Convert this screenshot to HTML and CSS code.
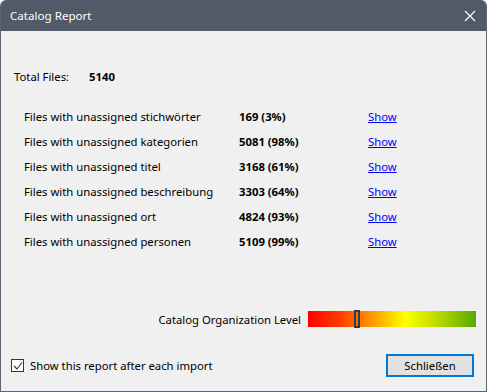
FILE: index.html
```html
<!DOCTYPE html>
<html lang="en">
<head>
    <meta charset="UTF-8">
    <title>Catalog Report</title>
    <link rel="stylesheet" href="styles.css">
</head>
<body>
    <div class="window">
        <div class="titlebar">
            <span class="title">Catalog Report</span>
            <svg class="close" width="12" height="12" viewBox="0 0 12 12">
                <path d="M1 1 L11 11 M11 1 L1 11" stroke="#fff" stroke-width="1.2" fill="none"/>
            </svg>
        </div>
        <div class="content">
            <div class="total">
                <span class="total-label">Total Files:</span>
                <span class="total-value">5140</span>
            </div>

            <div class="stats">
                <span class="label">Files with unassigned stichwörter</span>
                <span class="value">169 (3%)</span>
                <a class="show" href="#">Show</a>

                <span class="label">Files with unassigned kategorien</span>
                <span class="value">5081 (98%)</span>
                <a class="show" href="#">Show</a>

                <span class="label">Files with unassigned titel</span>
                <span class="value">3168 (61%)</span>
                <a class="show" href="#">Show</a>

                <span class="label">Files with unassigned beschreibung</span>
                <span class="value">3303 (64%)</span>
                <a class="show" href="#">Show</a>

                <span class="label">Files with unassigned ort</span>
                <span class="value">4824 (93%)</span>
                <a class="show" href="#">Show</a>

                <span class="label">Files with unassigned personen</span>
                <span class="value">5109 (99%)</span>
                <a class="show" href="#">Show</a>
            </div>

            <div class="level">
                <span class="level-label">Catalog Organization Level</span>
                <div class="level-bar">
                    <div class="marker" style="left: 46px"></div>
                </div>
            </div>

            <div class="footer">
                <label class="check">
                    <span class="box">
                        <svg width="10" height="10" viewBox="0 0 10 10">
                            <path d="M1 5 L4 8 L9 1.5" stroke="#333" stroke-width="1.1" fill="none"/>
                        </svg>
                    </span>
                    Show this report after each import
                </label>
                <button class="close-btn">Schließen</button>
            </div>
        </div>
    </div>
</body>
</html>
```

FILE: styles.css
```css
body {
    margin: 0;
    font-family: 'Noto Sans', sans-serif;
    font-size: 11.3px;
    color: #000;
    background: #fff;
}

.window {
    width: 487px;
    height: 392px;
    box-sizing: border-box;
    display: flex;
    flex-direction: column;
    background: #f0f0f0;
    border: 1px solid #5b6472;
    border-top: none;
    border-radius: 6px 6px 0 0;
    overflow: hidden;
}

.titlebar {
    height: 31px;
    flex: none;
    background: #505a68;
    color: white;
    display: flex;
    align-items: center;
    justify-content: space-between;
    padding: 0 10px 0 9px;
}

.title {
    font-size: 11.6px;
}

.close {
    display: block;
}

.content {
    flex: 1;
    display: flex;
    flex-direction: column;
    padding: 0 10px 0 10px;
}

.total {
    display: flex;
    margin-top: 37px;
    height: 16px;
    align-items: center;
}

.total-label {
    width: 75px;
    padding-left: 3px;
}

.total-value {
    font-weight: bold;
}

.stats {
    display: grid;
    grid-template-columns: 215px 129px auto;
    grid-auto-rows: 25px;
    align-items: center;
    margin-top: 20px;
    padding-left: 13px;
}

.value {
    font-weight: bold;
}

.show {
    color: #0000ff;
    text-decoration: underline;
    justify-self: start;
}

.level {
    display: flex;
    justify-content: flex-end;
    align-items: center;
    gap: 7px;
    margin-top: 57px;
}

.level-bar {
    position: relative;
    width: 168px;
    height: 16px;
    background: linear-gradient(to right, #ff0000 0%, #ff4000 20%, #ff9800 38%, #ffff00 58%, #b8d800 78%, #5aa800 100%);
}

.marker {
    position: absolute;
    top: -1px;
    width: 2px;
    height: 14px;
    border: 2px solid #333a45;
}

.footer {
    display: flex;
    justify-content: space-between;
    align-items: center;
    margin-top: 27px;
    padding-right: 2px;
}

.check {
    display: flex;
    align-items: center;
    gap: 6px;
}

.box {
    width: 11px;
    height: 11px;
    border: 1px solid #333;
    background: #fff;
    display: flex;
    align-items: center;
    justify-content: center;
}

.close-btn {
    width: 88px;
    height: 23px;
    font-family: 'Noto Sans', sans-serif;
    font-size: 11.3px;
    color: #000;
    background: #e1e1e1;
    border: 2px solid #0078d7;
    padding: 0;
}
```
